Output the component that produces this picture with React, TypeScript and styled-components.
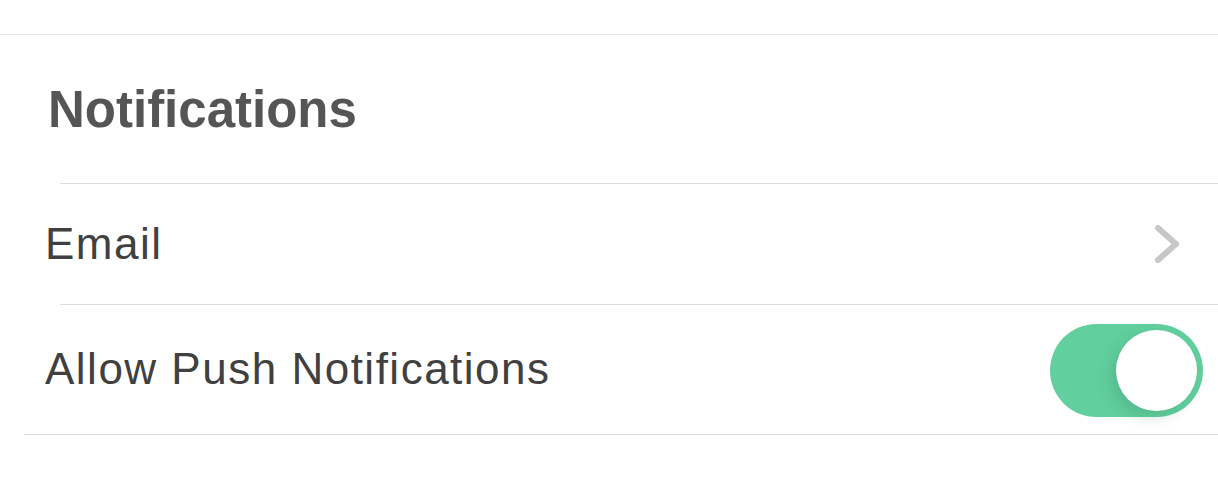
import { useState } from 'react';
import styled, { createGlobalStyle } from 'styled-components';

const GlobalStyle = createGlobalStyle`
  html, body {
    margin: 0;
    padding: 0;
    background: #fff;
  }
  body {
    font-family: 'Liberation Sans', Arial, sans-serif;
    -webkit-font-smoothing: antialiased;
  }
`;

const Page = styled.div`
  width: 1218px;
  height: 496px;
  padding-top: 34px;
  box-sizing: border-box;
  background: #fff;
  overflow: hidden;
`;

const Section = styled.section`
  border-top: 1px solid #e6e6e6;
`;

const Header = styled.h2`
  margin: 0;
  height: 148px;
  padding-left: 48px;
  display: flex;
  align-items: center;
  font-size: 51px;
  font-weight: 700;
  color: #555555;
`;

interface RowProps {
  height: number;
  inset: number;
}

const Row = styled.div<RowProps>`
  position: relative;
  height: ${(props) => props.height}px;
  padding: 0 15px 0 45px;
  display: flex;
  align-items: center;
  justify-content: space-between;

  &::before {
    content: '';
    position: absolute;
    top: 0;
    left: ${(props) => props.inset}px;
    right: 0;
    border-top: 1px solid #dcdcdc;
  }
`;

const Label = styled.span`
  font-size: 44px;
  letter-spacing: 1.5px;
  color: #404040;
`;

const BottomLine = styled.div`
  margin-left: 24px;
  border-top: 1px solid #dcdcdc;
`;

const Chevron = styled.svg`
  width: 30px;
  height: 42px;
  margin-right: 20px;
`;

const Track = styled.button<{ on: boolean }>`
  position: relative;
  width: 153px;
  height: 93px;
  margin-top: 3px;
  border: none;
  padding: 0;
  border-radius: 47px;
  background: ${(props) => (props.on ? '#62cf9e' : '#e5e5e5')};
  cursor: pointer;
  outline: none;
`;

const Knob = styled.span<{ on: boolean }>`
  position: absolute;
  top: 6px;
  left: ${(props) => (props.on ? '66px' : '6px')};
  width: 81px;
  height: 81px;
  border-radius: 50%;
  background: #fff;
  box-shadow: -6px 6px 14px rgba(40, 120, 80, 0.22);
  transition: left 0.2s;
`;

const App = () => {
  const [push, setPush] = useState(true);

  return (
    <Page>
      <GlobalStyle />
      <Section>
        <Header>Notifications</Header>
        <Row height={121} inset={60}>
          <Label>Email</Label>
          <Chevron viewBox="0 0 30 42">
            <path
              d="M5 5 L23 21 L5 37"
              fill="none"
              stroke="#c7c7c7"
              strokeWidth="6"
              strokeLinecap="round"
              strokeLinejoin="round"
            />
          </Chevron>
        </Row>
        <Row height={130} inset={60}>
          <Label>Allow Push Notifications</Label>
          <Track on={push} onClick={() => setPush(!push)}>
            <Knob on={push} />
          </Track>
        </Row>
        <BottomLine />
      </Section>
    </Page>
  );
};

export default App;
